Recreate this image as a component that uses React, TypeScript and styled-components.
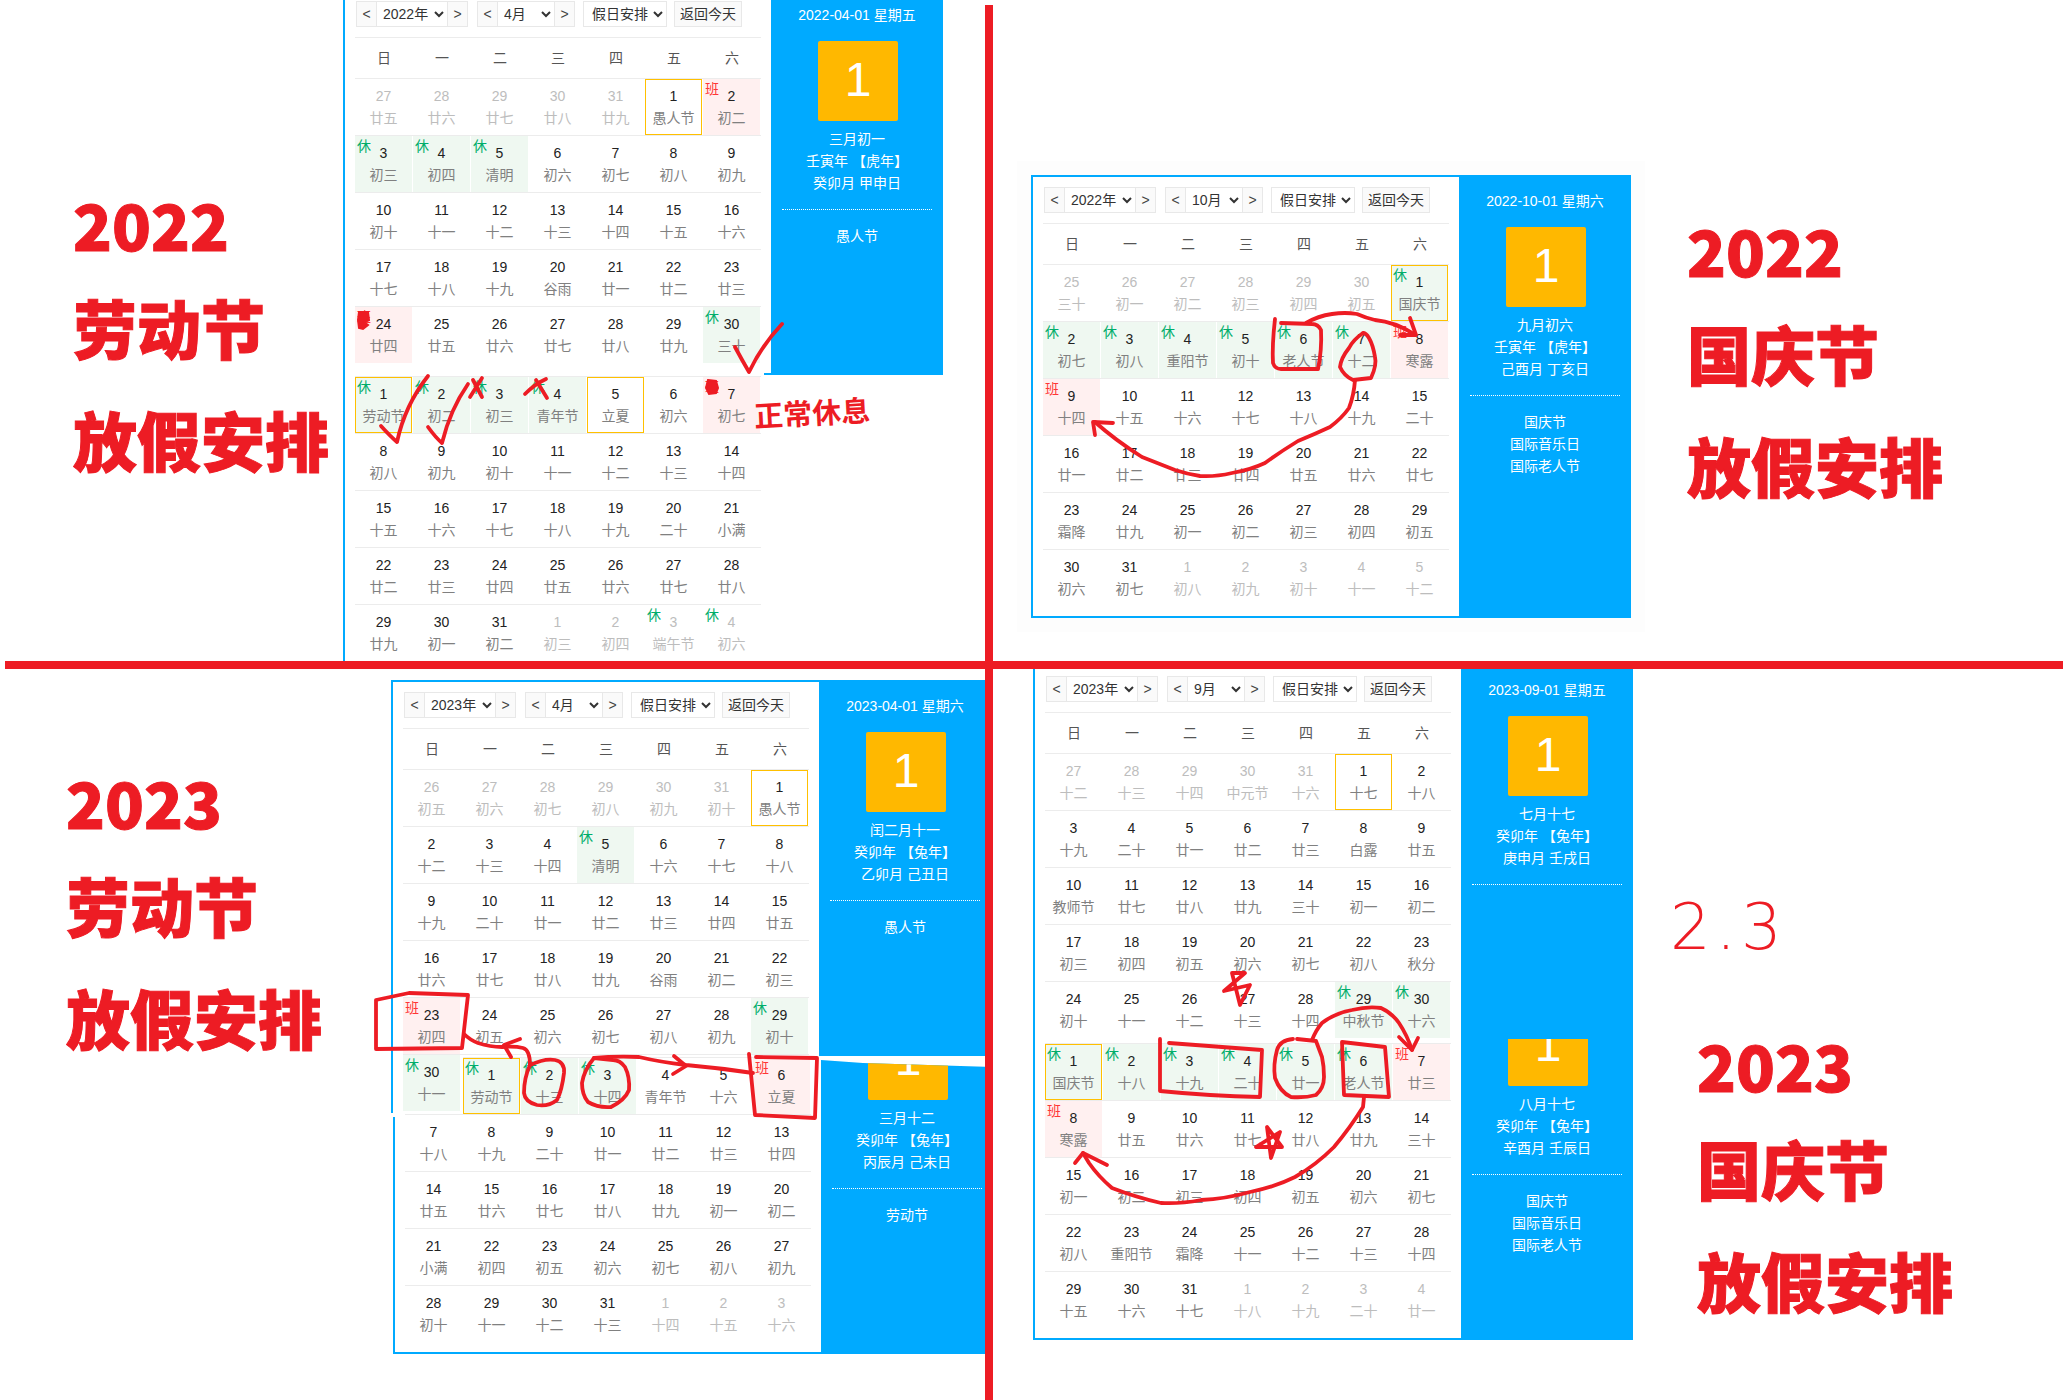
import React from "react";
import styled, { createGlobalStyle } from "styled-components";

const BLUE = "#00aaff";
const RED = "#ed1c24";
const FONT = `"Liberation Sans", "Noto Sans CJK SC", sans-serif`;

const Global = createGlobalStyle`
  html, body { margin: 0; padding: 0; background: #fff; }
  body { font-family: ${FONT}; }
`;

const Canvas = styled.div`
  position: relative;
  width: 2063px;
  height: 1400px;
  overflow: hidden;
  background: #fff;
`;

const Frame = styled.div<{ $x: number; $y: number; $clip?: string; $halo?: boolean }>`
  position: absolute;
  left: ${(p) => p.$x}px;
  top: ${(p) => p.$y}px;
  width: 600px;
  display: flex;
  background: ${BLUE};
  font: 14px/22px ${FONT};
  ${(p) => (p.$clip ? `clip-path: polygon(${p.$clip});` : "")}
  ${(p) => (p.$halo ? "box-shadow: 0 0 0 14px #fdfdfd;" : "")}
`;

const Sheet = styled.section`
  width: 426px;
  margin: 2px 0 2px 2px;
  padding: 10px 10px 9px;
  box-sizing: border-box;
  background: #fff;
`;

const Toolbar = styled.div<{ $ghost?: boolean }>`
  display: flex;
  height: 26px;
  margin-left: 1px;
  margin-bottom: 10px;
  visibility: ${(p) => (p.$ghost ? "hidden" : "visible")};
`;

const Group = styled.div<{ $after: number }>`
  display: flex;
  box-sizing: border-box;
  height: 26px;
  margin-right: ${(p) => p.$after}px;
  border: 1px solid #e8e8e8;
  background: #fafafa;
`;

const Nav = styled.button`
  width: 19px;
  height: 24px;
  padding: 0;
  border: 0;
  background: #fafafa;
  color: #444;
  font: 14px/24px ${FONT};
`;

const Picker = styled.select<{ $w: number; $edged?: boolean }>`
  width: ${(p) => p.$w}px;
  height: 24px;
  padding: 0 0 0 ${(p) => (p.$edged ? 2 : 4)}px;
  border: 0;
  border-left: ${(p) => (p.$edged ? "1px solid #e8e8e8" : "0")};
  border-right: ${(p) => (p.$edged ? "1px solid #e8e8e8" : "0")};
  border-radius: 0;
  box-sizing: border-box;
  background: #fff;
  color: #333;
  font: 14px ${FONT};
  outline: none;
`;

const Today = styled.button`
  width: 68px;
  height: 26px;
  padding: 0;
  box-sizing: border-box;
  border: 1px solid #e8e8e8;
  background: #fafafa;
  color: #333;
  font: 14px/24px ${FONT};
`;

const Week = styled.div`
  display: grid;
  grid-template-columns: repeat(7, 58px);
  height: 42px;
  box-sizing: border-box;
  border-top: 1px solid #ececec;
  border-bottom: 1px solid #ececec;
  color: #555;
  text-align: center;
  line-height: 40px;
`;

const WeekName = styled.div<{ $ghost?: boolean }>`
  visibility: ${(p) => (p.$ghost ? "hidden" : "visible")};
`;

const Row = styled.div`
  display: grid;
  grid-template-columns: repeat(7, 58px);
  height: 57px;
  box-sizing: border-box;
  border-bottom: 1px solid #ececec;
  &:last-child {
    border-bottom-color: transparent;
  }
`;

const Cell = styled.div<{ $kind?: string; $sel?: boolean; $other?: boolean; $ghost?: boolean }>`
  position: relative;
  margin-right: 1px;
  padding-top: 6px;
  box-sizing: border-box;
  height: 56px;
  text-align: center;
  visibility: ${(p) => (p.$ghost ? "hidden" : "visible")};
  background: ${(p) =>
    p.$other ? "transparent" : p.$kind === "r" ? "#eff8f1" : p.$kind === "w" ? "#fff0f0" : "transparent"};
  ${(p) => (p.$sel ? "outline: 1px solid #ffc000; outline-offset: -1px;" : "")}
  color: ${(p) => (p.$other ? "#bdbdbd" : "#222")};
`;

const Num = styled.div`
  line-height: 22px;
`;

const Lunar = styled.div<{ $other?: boolean }>`
  line-height: 22px;
  white-space: nowrap;
  color: ${(p) => (p.$other ? "#bdbdbd" : "#808080")};
`;

const Badge = styled.span<{ $kind: string }>`
  position: absolute;
  left: 2px;
  top: 2px;
  font-size: 14px;
  line-height: 16px;
  color: ${(p) => (p.$kind === "r" ? "#00ad6a" : "#ff3636")};
`;

const Side = styled.aside<{ $ghost?: boolean }>`
  width: 172px;
  padding-top: 15px;
  box-sizing: border-box;
  color: #fff;
  text-align: center;
  visibility: ${(p) => (p.$ghost ? "hidden" : "visible")};
`;

const Gold = styled.div`
  width: 80px;
  height: 80px;
  margin: 15px 0 7px 47px;
  border-radius: 2px;
  background: #ffb800;
  color: #fff;
  font: 48px/78px ${FONT};
`;

const Divider = styled.div`
  width: 150px;
  margin: 15px auto;
  border-top: 1px dotted #fff;
`;

const SideLine = styled.div<{ $ghost?: boolean }>`
  line-height: 22px;
  white-space: pre;
  visibility: ${(p) => (p.$ghost ? "hidden" : "visible")};
`;

const Title = styled.div<{ $x: number; $y: number }>`
  position: absolute;
  left: ${(p) => p.$x}px;
  top: ${(p) => p.$y}px;
  color: ${RED};
  font: 900 64px/64px "Noto Sans CJK SC", sans-serif;
  -webkit-text-stroke: 1px ${RED};
`;

const TitleYear = styled.div`
  margin-bottom: 39px;
`;

const TitleName = styled.div`
  margin-bottom: 48px;
`;

const Rule = styled.div<{ $vertical?: boolean }>`
  position: absolute;
  background: ${RED};
  ${(p) =>
    p.$vertical
      ? "left: 985px; top: 5px; width: 8px; height: 1395px;"
      : "left: 5px; top: 661px; width: 2058px; height: 8px;"}
`;

const Ink = styled.svg`
  position: absolute;
  left: 0;
  top: 0;
  pointer-events: none;
`;

const Stroke = styled.path.attrs({ fill: "none", stroke: RED, strokeLinecap: "round", strokeLinejoin: "round" })`
  stroke-width: 3.8px;
`;

const Scrawl = styled.div`
  position: absolute;
  left: 754px;
  top: 391px;
  color: ${RED};
  font: 700 29px/40px "Noto Sans CJK SC", sans-serif;
  transform: rotate(-3deg);
  white-space: nowrap;
`;

const Jot = styled.div`
  position: absolute;
  left: 1670px;
  top: 893px;
  color: ${RED};
  font: 200 64px/68px "DejaVu Sans", sans-serif;
  letter-spacing: 5px;
  white-space: nowrap;
`;

type Info = {
  year: string;
  month: string;
  date: string;
  lunar: string[];
  holidays: string[];
  days: string;
};

type Part = "whole" | "continued" | "rowsOnly";

const WEEK = ["日", "一", "二", "三", "四", "五", "六"];

function Calendar({
  info,
  x,
  y,
  clip,
  halo,
  part = "whole",
}: {
  info: Info;
  x: number;
  y: number;
  clip?: string;
  halo?: boolean;
  part?: Part;
}) {
  const rows = info.days.trim().split(/\n/).map((r) => r.trim().split(/\s+/));
  const ghostHead = part !== "whole";
  return (
    <Frame $x={x} $y={y} $clip={clip} $halo={halo}>
      <Sheet>
        <Toolbar $ghost={ghostHead}>
          <Group $after={9}>
            <Nav>&lt;</Nav>
            <Picker $w={72} $edged defaultValue={info.year}>
              <option>{info.year}</option>
            </Picker>
            <Nav>&gt;</Nav>
          </Group>
          <Group $after={8}>
            <Nav>&lt;</Nav>
            <Picker $w={58} $edged defaultValue={info.month}>
              <option>{info.month}</option>
            </Picker>
            <Nav>&gt;</Nav>
          </Group>
          <Group $after={7}>
            <Picker $w={82} defaultValue="假日安排">
              <option>假日安排</option>
            </Picker>
          </Group>
          <Today>返回今天</Today>
        </Toolbar>
        <Week>
          {WEEK.map((w) => (
            <WeekName key={w} $ghost={ghostHead}>
              {w}
            </WeekName>
          ))}
        </Week>
        {rows.map((row, i) => (
          <Row key={i}>
            {row.map((c, j) => {
              const [num, lunar, flags = ""] = c.split("|");
              const other = flags.includes("x");
              const kind = flags.includes("r") ? "r" : flags.includes("w") ? "w" : "";
              return (
                <Cell key={j} $kind={kind} $sel={flags.includes("s")} $other={other} $ghost={flags.includes("g")}>
                  {kind && <Badge $kind={kind}>{kind === "r" ? "休" : "班"}</Badge>}
                  <Num>{num}</Num>
                  <Lunar $other={other}>{lunar}</Lunar>
                </Cell>
              );
            })}
          </Row>
        ))}
      </Sheet>
      <Side $ghost={part === "rowsOnly"}>
        <SideLine $ghost={ghostHead}>{info.date}</SideLine>
        <Gold>1</Gold>
        {info.lunar.map((l) => (
          <SideLine key={l}>{l}</SideLine>
        ))}
        <Divider />
        {info.holidays.map((h) => (
          <SideLine key={h}>{h}</SideLine>
        ))}
      </Side>
    </Frame>
  );
}

const apr22: Info = {
  year: "2022年",
  month: "4月",
  date: "2022-04-01 星期五",
  lunar: ["三月初一", "壬寅年 【虎年】", "癸卯月 甲申日"],
  holidays: ["愚人节"],
  days: `27|廿五|x 28|廿六|x 29|廿七|x 30|廿八|x 31|廿九|x 1|愚人节|s 2|初二|w
3|初三|r 4|初四|r 5|清明|r 6|初六 7|初七 8|初八 9|初九
10|初十 11|十一 12|十二 13|十三 14|十四 15|十五 16|十六
17|十七 18|十八 19|十九 20|谷雨 21|廿一 22|廿二 23|廿三
24|廿四|w 25|廿五 26|廿六 27|廿七 28|廿八 29|廿九 30|三十|r`,
};

const may22: Info = {
  year: "2022年",
  month: "5月",
  date: "2022-05-01 星期日",
  lunar: ["四月初一", "壬寅年 【虎年】", "乙巳月 甲寅日"],
  holidays: ["劳动节"],
  days: `1|劳动节|rs 2|初二|r 3|初三|r 4|青年节|r 5|立夏|s 6|初六 7|初七|w
8|初八 9|初九 10|初十 11|十一 12|十二 13|十三 14|十四
15|十五 16|十六 17|十七 18|十八 19|十九 20|二十 21|小满
22|廿二 23|廿三 24|廿四 25|廿五 26|廿六 27|廿七 28|廿八
29|廿九 30|初一 31|初二 1|初三|x 2|初四|x 3|端午节|xr 4|初六|xr`,
};

const oct22: Info = {
  year: "2022年",
  month: "10月",
  date: "2022-10-01 星期六",
  lunar: ["九月初六", "壬寅年 【虎年】", "己酉月 丁亥日"],
  holidays: ["国庆节", "国际音乐日", "国际老人节"],
  days: `25|三十|x 26|初一|x 27|初二|x 28|初三|x 29|初四|x 30|初五|x 1|国庆节|rs
2|初七|r 3|初八|r 4|重阳节|r 5|初十|r 6|老人节|r 7|十二|r 8|寒露|w
9|十四|w 10|十五 11|十六 12|十七 13|十八 14|十九 15|二十
16|廿一 17|廿二 18|廿三 19|廿四 20|廿五 21|廿六 22|廿七
23|霜降 24|廿九 25|初一 26|初二 27|初三 28|初四 29|初五
30|初六 31|初七 1|初八|x 2|初九|x 3|初十|x 4|十一|x 5|十二|x`,
};

const apr23: Info = {
  year: "2023年",
  month: "4月",
  date: "2023-04-01 星期六",
  lunar: ["闰二月十一", "癸卯年 【兔年】", "乙卯月 己丑日"],
  holidays: ["愚人节"],
  days: `26|初五|x 27|初六|x 28|初七|x 29|初八|x 30|初九|x 31|初十|x 1|愚人节|s
2|十二 3|十三 4|十四 5|清明|r 6|十六 7|十七 8|十八
9|十九 10|二十 11|廿一 12|廿二 13|廿三 14|廿四 15|廿五
16|廿六 17|廿七 18|廿八 19|廿九 20|谷雨 21|初二 22|初三
23|初四|w 24|初五 25|初六 26|初七 27|初八 28|初九 29|初十|r
30|十一|r`,
};

const may23: Info = {
  year: "2023年",
  month: "5月",
  date: "2023-05-01 星期一",
  lunar: ["三月十二", "癸卯年 【兔年】", "丙辰月 己未日"],
  holidays: ["劳动节"],
  days: `30|十一|g 1|劳动节|rs 2|十三|r 3|十四|r 4|青年节 5|十六 6|立夏|w
7|十八 8|十九 9|二十 10|廿一 11|廿二 12|廿三 13|廿四
14|廿五 15|廿六 16|廿七 17|廿八 18|廿九 19|初一 20|初二
21|小满 22|初四 23|初五 24|初六 25|初七 26|初八 27|初九
28|初十 29|十一 30|十二 31|十三 1|十四|x 2|十五|x 3|十六|x`,
};

const sep23: Info = {
  year: "2023年",
  month: "9月",
  date: "2023-09-01 星期五",
  lunar: ["七月十七", "癸卯年 【兔年】", "庚申月 壬戌日"],
  holidays: [],
  days: `27|十二|x 28|十三|x 29|十四|x 30|中元节|x 31|十六|x 1|十七|s 2|十八
3|十九 4|二十 5|廿一 6|廿二 7|廿三 8|白露 9|廿五
10|教师节 11|廿七 12|廿八 13|廿九 14|三十 15|初一 16|初二
17|初三 18|初四 19|初五 20|初六 21|初七 22|初八 23|秋分
24|初十 25|十一 26|十二 27|十三 28|十四 29|中秋节|r 30|十六|r`,
};

const oct23: Info = {
  year: "2023年",
  month: "10月",
  date: "2023-10-01 星期日",
  lunar: ["八月十七", "癸卯年 【兔年】", "辛酉月 壬辰日"],
  holidays: ["国庆节", "国际音乐日", "国际老人节"],
  days: `1|国庆节|rs 2|十八|r 3|十九|r 4|二十|r 5|廿一|r 6|老人节|r 7|廿三|w
8|寒露|w 9|廿五 10|廿六 11|廿七 12|廿八 13|廿九 14|三十
15|初一 16|初二 17|初三 18|初四 19|初五 20|初六 21|初七
22|初八 23|重阳节 24|霜降 25|十一 26|十二 27|十三 28|十四
29|十五 30|十六 31|十七 1|十八|x 2|十九|x 3|二十|x 4|廿一|x`,
};

const CLIP = {
  a1: "0 0, 600px 0, 600px 386px, 421px 386px, 421px 384px, 421px 374px, 2px 374px, 2px 380px, 0 380px",
  a2: "0 78px, 421px 78px, 421px 374px, 0 374px",
  c1: "0 0, 600px 0, 600px 376px, 70px 376px, 70px 433px, 0 433px",
  c2: "70px 89px, 428px 89px, 428px 92px, 470px 95px, 600px 99px, 600px 386px, 0 386px, 0 149px, 2px 149px, 2px 146px, 70px 146px",
  d1: "0 0, 600px 0, 600px 375px, 0 375px",
  d2: "0 85px, 600px 85px, 600px 386px, 0 386px",
};

const HeadLine = ({ x, y, year, name }: { x: number; y: number; year: string; name: string }) => (
  <Title $x={x} $y={y}>
    <TitleYear>{year}</TitleYear>
    <TitleName>{name}</TitleName>
    <div>放假安排</div>
  </Title>
);

const MARKS: string[] = [
  // 2022 五一
  "M735 347 Q742 360 749 372 Q762 345 782 324",
  "M381 426 Q390 436 397 442 Q405 405 428 376",
  "M428 427 Q436 438 442 443 Q450 410 468 384",
  "M470 397 L482 378 M473 380 L482 397",
  "M525 394 Q535 384 546 379 M536 380 L547 398",
  // 2022 十一
  "M1275 319 Q1272 345 1273 363 Q1275 369 1281 369 L1318 369 Q1322 350 1321 330 Q1318 324 1312 324 L1281 323",
  "M1306 323 Q1318 316 1332 314 Q1345 312 1357 314 Q1366 318 1375 320 Q1395 322 1414 334",
  "M1410 318 L1416 335 L1400 335",
  "M1363 333 Q1353 340 1349 348 Q1341 358 1340 367 Q1344 376 1353 380 L1371 378 Q1377 365 1375 357 Q1373 345 1369 338 Q1366 333 1363 333",
  "M1355 380 Q1354 395 1349 408 Q1342 418 1330 427 Q1315 434 1298 441 Q1280 452 1265 463 Q1250 470 1232 473 Q1215 477 1200 476 Q1187 474 1175 470 L1142 457 Q1115 440 1095 422",
  "M1113 423 L1093 422 L1095 435",
  // 2023 五一
  "M376 1049 L376 1000 L409 993 L468 995 L462 1048 L376 1049",
  "M464 1034 Q470 1040 478 1043 Q490 1047 502 1047 Q515 1046 523 1048 Q530 1050 530 1065",
  "M520 1039 L504 1045 L511 1057",
  "M530 1065 Q545 1058 555 1060 Q565 1062 564 1073 Q562 1090 557 1100 Q548 1107 537 1105 Q525 1102 524 1093 Q524 1078 530 1065",
  "M594 1058 Q584 1070 582 1083 Q582 1095 588 1102 Q598 1108 611 1107 Q625 1100 629 1090 Q630 1077 625 1067 Q620 1060 613 1060 L594 1058",
  "M594 1058 Q615 1056 639 1057 Q660 1062 686 1065 Q720 1068 753 1073",
  "M674 1056 L686 1066 L673 1074",
  "M749 1054 L755 1115 L815 1118 L817 1058 L756 1057",
  // 2023 十一
  "M1232 973 L1240 1005 L1250 985 L1224 991 L1245 973 Z",
  "M1160 1039 L1160 1091 Q1210 1096 1260 1097 L1262 1050 L1169 1043",
  "M1293 1039 Q1280 1040 1277 1050 Q1273 1065 1275 1078 Q1280 1092 1291 1097 Q1305 1098 1316 1095 Q1324 1088 1324 1077 Q1324 1066 1322 1057 L1316 1041 L1297 1039",
  "M1312 1040 Q1316 1030 1322 1023 Q1335 1013 1352 1010 Q1368 1006 1381 1008 Q1392 1013 1399 1023 Q1407 1035 1412 1050",
  "M1399 1037 L1412 1050 L1418 1038",
  "M1342 1042 L1344 1095 L1389 1097 L1385 1047 L1342 1042",
  "M1364 1097 L1363 1107 Q1350 1128 1334 1147 Q1316 1165 1295 1177 Q1275 1187 1250 1192 Q1225 1199 1201 1200 Q1180 1204 1161 1203 Q1135 1197 1112 1188 Q1098 1176 1089 1163 L1083 1153",
  "M1075 1163 L1083 1153 L1107 1165",
  "M1267 1127 L1271 1158 L1280 1132 L1256 1147 L1282 1147 Z",
];

const BLOTS = [
  "M359 312 L368 312 L369 320 L364 322 L368 325 L363 329 L359 328 L358 320 Z",
  "M708 380 L716 381 L718 388 L716 393 L709 394 L706 388 Z",
];

export default function App() {
  return (
    <Canvas>
      <Global />
      <Calendar info={apr22} x={343} y={-11} clip={CLIP.a1} />
      <Calendar info={may22} x={343} y={287} clip={CLIP.a2} part="rowsOnly" />
      <Calendar info={oct22} x={1031} y={175} halo />
      <Calendar info={apr23} x={391} y={680} clip={CLIP.c1} />
      <Calendar info={may23} x={393} y={968} clip={CLIP.c2} part="continued" />
      <Calendar info={sep23} x={1033} y={664} clip={CLIP.d1} />
      <Calendar info={oct23} x={1033} y={954} clip={CLIP.d2} part="continued" />

      <HeadLine x={73} y={191} year="2022" name="劳动节" />
      <HeadLine x={1687} y={217} year="2022" name="国庆节" />
      <HeadLine x={66} y={769} year="2023" name="劳动节" />
      <HeadLine x={1697} y={1032} year="2023" name="国庆节" />

      <Rule />
      <Rule $vertical />

      <Ink width={2063} height={1400} viewBox="0 0 2063 1400">
        {MARKS.map((d, i) => (
          <Stroke key={i} d={d} />
        ))}
        {BLOTS.map((d, i) => (
          <path key={i} d={d} fill={RED} stroke={RED} strokeWidth={2} />
        ))}
      </Ink>

      <Scrawl>正常休息</Scrawl>
      <Jot>2.3</Jot>
    </Canvas>
  );
}
